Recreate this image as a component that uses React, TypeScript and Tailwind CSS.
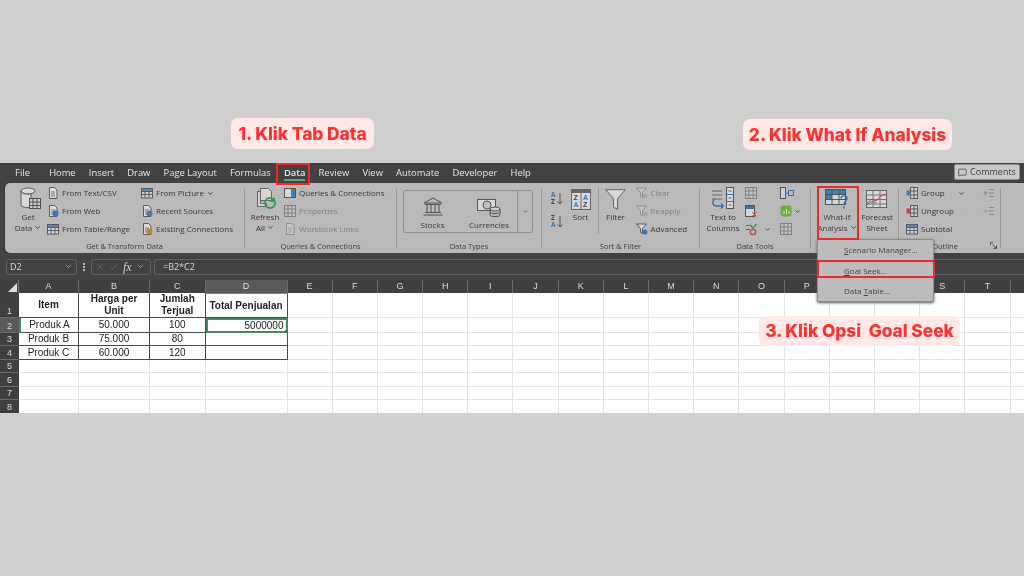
import type { ReactNode } from "react";
import clsx from "clsx";
import { ChevronDown, Check, X, MessageSquare } from "lucide-react";

const tabs = ["File", "Home", "Insert", "Draw", "Page Layout", "Formulas", "Data", "Review", "View", "Automate", "Developer", "Help"];
const columns = "ABCDEFGHIJKLMNOPQRSTU".split("");

const rows: Record<number, string[]> = {
  1: ["Item", "Harga per Unit", "Jumlah Terjual", "Total Penjualan"],
  2: ["Produk A", "50.000", "100", "5000000"],
  3: ["Produk B", "75.000", "80", ""],
  4: ["Produk C", "60.000", "120", ""],
};

const Icon = ({ w = 12, h = 12, children }: { w?: number; h?: number; children: ReactNode }) => (
  <svg width={w} height={h} viewBox={`0 0 ${w} ${h}`} fill="none" className="shrink-0">
    {children}
  </svg>
);

const Doc = ({ badge, muted }: { badge?: string; muted?: boolean }) => (
  <Icon>
    <path d="M2.500 .5h5l2.500 2.500v8.500h-7.500z" fill={muted ? "#c6c6c6" : "#dcdcdc"} stroke={muted ? "#8f8f8f" : "#5c5c5c"} />
    <path d="M4 5h4M4 7h4M4 9h4" stroke={muted ? "#a0a0a0" : "#777"} />
    {badge && <circle cx="8.500" cy="8.500" r="3" fill={badge} />}
  </Icon>
);

const TableIcon = ({ fill = "#d8d8d8" }: { fill?: string }) => (
  <Icon>
    <rect x=".5" y="1.500" width="11" height="9.500" fill={fill} stroke="#5c5c5c" />
    <path d="M.5 4.500h11M.5 7.500h11M4 1.500v9.500M8 1.500v9.500" stroke="#5c5c5c" />
    <rect x="1" y="2" width="10" height="2" fill="#4d8bbd" />
  </Icon>
);

const OutlineIcon = ({ mark }: { mark: string }) => (
  <Icon>
    <rect x="4.500" y=".5" width="7" height="11" fill="#d0d0d0" stroke="#5c5c5c" />
    <path d="M4.500 4h7M4.500 8h7M8 .5v11" stroke="#5c5c5c" />
    <rect x=".5" y="3.500" width="4" height="5" fill={mark} />
  </Icon>
);

const Funnel = ({ muted, badge }: { muted?: boolean; badge?: string }) => (
  <Icon>
    <path d="M.5 1h10l-4 4.500v5l-2-1v-4z" fill={muted ? "#c4c4c4" : "#d6d6d6"} stroke={muted ? "#8f8f8f" : "#555"} />
    {badge && <circle cx="9" cy="9" r="2.500" fill={badge} />}
  </Icon>
);

const GreyGrid = () => (
  <Icon>
    <rect x=".5" y=".5" width="11" height="11" fill="#c2c2c2" stroke="#808080" />
    <path d="M.5 4h11M.5 8h11M4 .5v11M8 .5v11" stroke="#808080" />
  </Icon>
);

function SmallRow({ icon, label, muted, caret }: { icon: ReactNode; label: string; muted?: boolean; caret?: boolean }) {
  return (
    <div className={clsx("flex h-[18px] items-center gap-[3px] whitespace-nowrap", muted ? "text-[#838383]" : "text-[#383838]")}>
      {icon}
      <span>{label}</span>
      {caret && <ChevronDown size={7} strokeWidth={3} />}
    </div>
  );
}

function Group({ label, className, children }: { label?: string; className: string; children: ReactNode }) {
  return (
    <section className={clsx("flex h-full shrink-0 flex-col", className)}>
      <div className="flex h-[56px] items-start">{children}</div>
      <p className="h-[14px] text-center text-[7.500px] leading-[14px] text-[#3d3d3d]">{label}</p>
    </section>
  );
}

const Sep = () => <div className="my-[5px] w-px shrink-0 bg-[#999999]" />;

function Big({ icon, lines, className, caret }: { icon: ReactNode; lines: string[]; className: string; caret?: boolean }) {
  return (
    <div className={clsx("flex shrink-0 flex-col items-center text-center leading-[11px] text-[#383838]", className)}>
      <div className="flex h-[24px] items-end">{icon}</div>
      <div className="mt-[1px]">{lines[0]}</div>
      <div className="flex items-center gap-[2px]">
        {lines[1]}
        {caret && <ChevronDown size={7} strokeWidth={3} />}
      </div>
    </div>
  );
}

function GridCell({ row, col }: { row: number; col: number }) {
  const value = col < 4 ? rows[row]?.[col] : "";
  const inTable = row <= 4 && col < 4;
  const isActive = row === 2 && col === 3;
  return (
    <div
      className={clsx(
        "flex items-center justify-center overflow-hidden px-[2px] text-center text-[10px] text-[#222222]",
        row === 1 ? "leading-[12px]" : "leading-[13px]",
        isActive
          ? "relative justify-end overflow-visible border-2 border-[#3f8c63]"
          : clsx("border-r border-b", inTable ? "border-[#4a4a4a]" : "border-[#e2e2e2]"),
        row === 1 && col < 4 && "font-bold",
        row === 1 && col === 3 && "whitespace-nowrap border-t border-t-[#5f9c7c]",
        row === 2 && col === 0 && "border-l-2 border-l-[#3f8c63]",
      )}
    >
      {value}
      {isActive && <span className="absolute -right-[2px] -bottom-[2px] size-[3px] bg-[#2f7d55]" />}
    </div>
  );
}

function Sheet() {
  return (
    <div className="grid h-[133px] grid-cols-[19px_60px_71px_55.5px_82px_repeat(17,45.2px)] grid-rows-[13px_25px_14.5px_13.5px_13.5px_repeat(4,13.5px)] overflow-hidden bg-white font-['Liberation_Sans',sans-serif]">
      <div className="flex items-end justify-end border-r border-[#777777] bg-[#3f3f3f] p-[1px]">
        <div className="size-0 border-b-[9px] border-l-[9px] border-b-[#dddddd] border-l-transparent" />
      </div>
      {columns.map((c) => (
        <div
          key={c}
          className={clsx(
            "flex items-center justify-center border-r border-[#6a6a6a] text-[9px] text-[#dcdcdc]",
            c === "D" ? "bg-[#5a5a5a]" : "bg-[#3f3f3f]",
          )}
        >
          {c === "U" ? "" : c}
        </div>
      ))}
      {[1, 2, 3, 4, 5, 6, 7, 8].flatMap((r) => [
        <div
          key={`h${r}`}
          className={clsx(
            "flex items-end justify-center border-b border-[#6a6a6a] text-[9px] leading-[12px] text-[#dcdcdc]",
            r === 2 ? "bg-[#5a5a5a]" : "bg-[#3f3f3f]",
          )}
        >
          {r}
        </div>,
        ...columns.map((_, c) => <GridCell key={`${r}-${c}`} row={r} col={c} />),
      ])}
    </div>
  );
}

function SortArrow() {
  return (
    <svg width="6" height="12" viewBox="0 0 6 12" fill="none" stroke="#555" className="ml-[1px]">
      <path d="M3 0v11M.5 8.500L3 11l2.500-2.500" />
    </svg>
  );
}

function Ribbon() {
  return (
    <div className="ml-[5px] flex h-[70px] rounded-l-[5px] bg-[#b9b9b9] font-['Open_Sans',sans-serif] text-[8px] shadow-[0_1px_2px_#222]">
      <Group label="Get & Transform Data" className="w-[239px]">
        <Big
          className="ml-[7px] mt-[3px] w-[32px]"
          lines={["Get", "Data"]}
          caret
          icon={
            <div className="pl-[4px]">
              <Icon w={22} h={23}>
                <ellipse cx="9" cy="4" rx="7" ry="3" fill="#dcdcdc" stroke="#5c5c5c" />
                <path d="M2 4v14c0 1.500 3 2.500 7 2.500h3V7c-2 .3-9 .5-10-3z" fill="#d8d8d8" stroke="#5c5c5c" />
                <rect x="10.500" y="11.500" width="11" height="10" fill="#cfcfcf" stroke="#4f4f4f" />
                <path d="M10.500 15h11M10.500 18.500h11M14 11.500v10M18 11.500v10" stroke="#4f4f4f" />
              </Icon>
            </div>
          }
        />
        <div className="ml-[3px] w-[94px] pt-[1px]">
          <SmallRow icon={<Doc />} label="From Text/CSV" />
          <SmallRow icon={<Doc badge="#3576ad" />} label="From Web" />
          <SmallRow icon={<TableIcon />} label="From Table/Range" />
        </div>
        <div className="pt-[1px]">
          <SmallRow icon={<TableIcon fill="#cfcfcf" />} label="From Picture" caret />
          <SmallRow icon={<Doc badge="#4d7fa8" />} label="Recent Sources" />
          <SmallRow icon={<Doc badge="#b88a2c" />} label="Existing Connections" />
        </div>
      </Group>
      <Sep />
      <Group label="Queries & Connections" className="w-[151px]">
        <Big
          className="ml-[4px] mt-[3px] w-[32px]"
          lines={["Refresh", "All"]}
          caret
          icon={
            <div className="pl-[3px]">
              <Icon w={21} h={23}>
                <path d="M4.500 1.500h8l3 3v9h-11z" fill="#d6d6d6" stroke="#666" />
                <path d="M1.500 4.500h3v12h6v3h-9z" fill="#cfcfcf" stroke="#666" />
                <circle cx="14" cy="16" r="5" stroke="#3d9658" strokeWidth="2" />
                <path d="M19 10v5h-5" fill="#3d9658" />
              </Icon>
            </div>
          }
        />
        <div className="ml-[3px] pt-[1px]">
          <SmallRow
            icon={
              <Icon>
                <rect x=".5" y="1.500" width="11" height="9" fill="#d8d8d8" stroke="#555" />
                <rect x="7" y="2" width="4" height="8" fill="#3f7fb8" />
              </Icon>
            }
            label="Queries & Connections"
          />
          <SmallRow icon={<GreyGrid />} label="Properties" muted />
          <SmallRow icon={<Doc muted />} label="Workbook Links" muted />
        </div>
      </Group>
      <Sep />
      <Group label="Data Types" className="w-[144px]">
        <div className="ml-[6px] mt-[7px] flex h-[43px] w-[130px] rounded-[3px] border border-[#8f8f8f] text-[#383838]">
          <div className="flex w-[57px] flex-col items-center">
            <svg width="22" height="20" viewBox="0 0 22 20" fill="none" className="mt-[6px]" stroke="#555">
              <path d="M11 1L2 6h18zM3 7.500h16M5 8v7M9 8v7M13 8v7M17 8v7M3 15.500h16M1.500 18h19" />
            </svg>
            <span className="mt-[2px]">Stocks</span>
          </div>
          <div className="flex w-[56px] flex-col items-center">
            <svg width="24" height="20" viewBox="0 0 24 20" fill="none" className="mt-[6px]" stroke="#555">
              <rect x=".5" y="2.500" width="18" height="11" fill="#d8d8d8" />
              <circle cx="10" cy="8" r="4" fill="#c2c2c2" />
              <ellipse cx="18" cy="12" rx="5" ry="2" fill="#d0d0d0" />
              <path d="M13 12v6c0 1 2 1.500 5 1.500s5-.5 5-1.500v-6M13 15c0 1 2 1.500 5 1.500s5-.5 5-1.500" />
            </svg>
            <span className="mt-[2px]">Currencies</span>
          </div>
          <div className="flex flex-1 items-center justify-center border-l border-[#8f8f8f]">
            <ChevronDown size={7} strokeWidth={2.500} className="text-[#555]" />
          </div>
        </div>
      </Group>
      <Sep />
      <Group label="Sort & Filter" className="w-[157px]">
        <div className="ml-[9px] mt-[9px] flex flex-col gap-[10px]">
          {[
            ["A", "Z"],
            ["Z", "A"],
          ].map(([a, b]) => (
            <div key={a} className="flex items-center font-bold">
              <div className="flex flex-col text-[6.500px] leading-[6.500px]">
                <span className={a === "A" ? "text-[#2f77b5]" : "text-[#444]"}>{a}</span>
                <span className={b === "A" ? "text-[#2f77b5]" : "text-[#444]"}>{b}</span>
              </div>
              <SortArrow />
            </div>
          ))}
        </div>
        <Big
          className="ml-[6px] mt-[3px] w-[24px]"
          lines={["Sort", ""]}
          icon={
            <svg width="20" height="21" viewBox="0 0 20 21" fill="none" className="font-['Liberation_Sans',sans-serif] text-[7px] font-bold">
              <rect x=".5" y=".5" width="19" height="20" fill="#d8d8d8" stroke="#666" />
              <rect x="1" y="1" width="18" height="3" fill="#666" />
              <path d="M10 4v16" stroke="#666" />
              <text x="2.500" y="11" fill="#444">Z</text>
              <text x="12" y="11" fill="#2f77b5">A</text>
              <text x="2.500" y="18" fill="#2f77b5">A</text>
              <text x="12" y="18" fill="#444">Z</text>
            </svg>
          }
        />
        <div className="ml-[5px] mt-[5px] h-[46px] w-px bg-[#999999]" />
        <Big
          className="ml-[3px] mt-[3px] w-[28px]"
          lines={["Filter", ""]}
          icon={
            <svg width="21" height="21" viewBox="0 0 21 21" fill="none">
              <path d="M.7 .7h19.600l-7.800 9v10.500l-4-2v-8.500z" fill="#d8d8d8" stroke="#666" />
            </svg>
          }
        />
        <div className="ml-[6px] pt-[1px]">
          <SmallRow icon={<Funnel muted badge="#a8a8a8" />} label="Clear" muted />
          <SmallRow icon={<Funnel muted badge="#a8a8a8" />} label="Reapply" muted />
          <SmallRow icon={<Funnel badge="#2f77b5" />} label="Advanced" />
        </div>
      </Group>
      <Sep />
      <Group label="Data Tools" className="w-[110px]">
        <Big
          className="ml-[5px] mt-[3px] w-[36px]"
          lines={["Text to", "Columns"]}
          icon={
            <Icon w={24} h={23}>
              <path d="M1 4h10M1 8h10M1 12h10" stroke="#666" />
              <rect x="15.500" y=".5" width="7" height="21" fill="#d8d8d8" stroke="#555" />
              <path d="M15.500 7.500h7M15.500 14.500h7M17.500 4h3M17.500 11h3M17.500 18h3" stroke="#2f77b5" />
              <path d="M4 12c-3 2-3 6 1 7h7m-2-2.500l2.500 2.500-2.500 2.500" stroke="#2f77b5" strokeWidth="1.300" />
            </Icon>
          }
        />
        <div className="ml-[4px] w-[35px] pt-[1px]">
          <div className="flex h-[18px] items-center"><GreyGrid /></div>
          <div className="flex h-[18px] items-center">
            <Icon>
              <rect x=".5" y=".5" width="9" height="11" fill="#d6d6d6" stroke="#555" />
              <rect x="1" y="1" width="8" height="3" fill="#2f77b5" />
              <path d="M7 7l4.500 4.500M11.500 7L7 11.500" stroke="#c8413b" />
            </Icon>
          </div>
          <div className="flex h-[18px] items-center gap-[7px]">
            <Icon>
              <path d="M1 2.500h6M1 6.500h4" stroke="#666" />
              <path d="M6 3l2 2 3.500-4" stroke="#3d9658" strokeWidth="1.200" />
              <circle cx="8" cy="9" r="2.700" stroke="#c8413b" strokeWidth="1.200" />
            </Icon>
            <ChevronDown size={7} strokeWidth={3} className="text-[#444]" />
          </div>
        </div>
        <div className="pt-[1px]">
          <div className="flex h-[18px] items-center">
            <Icon w={14}>
              <rect x=".5" y=".5" width="5" height="11" fill="#d0d0d0" stroke="#555" />
              <rect x="8.500" y="3.500" width="5" height="5" stroke="#2f77b5" />
              <path d="M5 6h4" stroke="#2f77b5" />
            </Icon>
          </div>
          <div className="flex h-[18px] items-center gap-[2px]">
            <Icon>
              <rect x=".5" y=".5" width="11" height="11" rx="3" fill="#6fae43" />
              <path d="M4 9V6M6.500 9V4M9 9V6" stroke="#d8e8c8" />
            </Icon>
            <ChevronDown size={7} strokeWidth={3} className="text-[#444]" />
          </div>
          <div className="flex h-[18px] items-center"><GreyGrid /></div>
        </div>
      </Group>
      <Sep />
      <Group className="w-[87px]">
        <Big
          className="ml-[5px] mt-[3px] w-[42px]"
          lines={["What-If", "Analysis"]}
          caret
          icon={
            <Icon w={24} h={22}>
              <rect x=".5" y="1.500" width="20" height="15" fill="#d6d6d6" stroke="#555" />
              <rect x="1" y="2" width="6" height="9" fill="#3f7fb8" />
              <rect x="7" y="2" width="13" height="4" fill="#3f7fb8" />
              <path d="M.5 6.500h20M.5 11.500h20M7 1.500v15M14 1.500v15" stroke="#555" />
              <path d="M16 10.500c0-3.500 6-3.500 6 0 0 2.500-3 2.500-3 5.500M19 18v2.500" stroke="#2f77b5" strokeWidth="1.400" />
            </Icon>
          }
        />
        <Big
          className="ml-[1px] mt-[3px] w-[36px]"
          lines={["Forecast", "Sheet"]}
          icon={
            <Icon w={22} h={20}>
              <rect x=".5" y=".5" width="20" height="17" fill="#d6d6d6" stroke="#666" />
              <path d="M.5 5h20M.5 9.500h20M.5 14h20M7 .5v17M14 .5v17" stroke="#777" />
              <path d="M1 13l5-4 4 2 5-5 5-2" stroke="#c8413b" />
              <path d="M1 14.500l5-3 4 1" stroke="#2f77b5" />
            </Icon>
          }
        />
      </Group>
      <Sep />
      <Group label="Outline" className="relative w-[101px] pl-[7px] pr-[16px]">
        <div className="w-[62px] shrink-0 pt-[1px]">
          <div className="flex items-center">
            <SmallRow icon={<OutlineIcon mark="#3f7fb8" />} label="Group" />
            <ChevronDown size={7} strokeWidth={3} className="ml-[13px] text-[#444]" />
          </div>
          <div className="flex items-center">
            <SmallRow icon={<OutlineIcon mark="#c8413b" />} label="Ungroup" />
            <ChevronDown size={7} strokeWidth={3} className="ml-[13px] text-[#444]" />
          </div>
          <SmallRow icon={<TableIcon fill="#cfcfcf" />} label="Subtotal" />
        </div>
        <div className="ml-[15px] shrink-0 pt-[1px]">
          {[0, 1].map((i) => (
            <div key={i} className="flex h-[18px] items-center">
              <Icon>
                <path d="M6 2.500h5M6 6h5M6 9.500h5" stroke="#8a8a8a" />
                <path d={i === 0 ? "M.5 6h4M2.500 4v4" : "M.5 6h4"} stroke="#8a8a8a" />
              </Icon>
            </div>
          ))}
        </div>
        <svg width="7" height="7" viewBox="0 0 7 7" fill="none" stroke="#555" className="absolute right-[3px] bottom-[4px]">
          <path d="M.5 3V.5H3M2.500 2.500l4 4M6.500 3.500v3h-3" />
        </svg>
      </Group>
      <Sep />
    </div>
  );
}

function FormulaBar() {
  return (
    <div className="flex h-[27px] items-center bg-[#424242] pl-[6px] font-['Open_Sans',sans-serif] text-[9px] text-[#d8d8d8]">
      <div className="flex h-[16px] w-[71px] items-center justify-between rounded-[3px] border border-[#5f5f5f] px-[3px]">
        D2
        <ChevronDown size={9} className="text-[#bbbbbb]" />
      </div>
      <div className="mx-[6px] flex w-[2px] flex-col gap-[1px]">
        <span className="h-[2px] bg-[#bbbbbb]" />
        <span className="h-[2px] bg-[#bbbbbb]" />
        <span className="h-[2px] bg-[#bbbbbb]" />
      </div>
      <div className="flex h-[16px] w-[60px] items-center gap-[4px] rounded-[3px] border border-[#5f5f5f] px-[3px] text-[#8c8c8c]">
        <X size={10} strokeWidth={1} />
        <Check size={10} strokeWidth={1} />
        <span className="font-['Liberation_Serif',serif] text-[12px] italic text-[#cccccc]">fx</span>
        <ChevronDown size={9} className="text-[#bbbbbb]" />
      </div>
      <div className="ml-[3px] flex h-[16px] flex-1 items-center rounded-l-[3px] border border-r-0 border-[#5f5f5f] pl-[8px]">
        =B2*C2
      </div>
    </div>
  );
}

function Callout({ className, children }: { className: string; children: ReactNode }) {
  return (
    <div className={clsx("absolute z-20 flex items-center justify-center rounded-[7px] bg-[#ffe8e6] font-['Inter',sans-serif] text-[17.300px] font-extrabold whitespace-nowrap text-[#ff3131]", className)}>
      {children}
    </div>
  );
}

export default function App() {
  return (
    <main className="relative h-[576px] w-[1024px] overflow-hidden bg-[#cfcfcf] pt-[163px] blur-[0.3px]">
      <Callout className="top-[118px] left-[231px] h-[31px] w-[143px]">1. Klik Tab Data</Callout>
      <Callout className="top-[119px] left-[743px] h-[31px] w-[209px]">2. Klik What If Analysis</Callout>
      <Callout className="top-[316px] left-[759px] h-[30px] w-[201px]">3. Klik Opsi&nbsp; Goal Seek</Callout>

      <div className="bg-[#424242]">
        <div className="relative flex h-[20px] items-center pl-[8.500px] font-['Open_Sans',sans-serif] text-[9.400px] text-[#e6e6e6]">
          {tabs.map((t) => (
            <div key={t} className={clsx("relative px-[6.600px]", t === "File" && "mr-[6px]", t === "Data" && "font-semibold")}>
              {t}
              {t === "Data" && <span className="absolute right-[6.600px] -bottom-[1px] left-[6.600px] h-[2px] bg-[#62a886]" />}
            </div>
          ))}
          <div className="absolute top-[1px] right-[4px] flex h-[16px] w-[66px] items-center justify-center gap-[3px] rounded-[2px] border border-[#8a8a8a] bg-[#c9c9c9] text-[9px] text-[#3f3f3f]">
            <MessageSquare size={9} />
            Comments
          </div>
        </div>
        <Ribbon />
        <FormulaBar />
        <Sheet />
      </div>

      {/* red marks and the open menu sit over the ribbon */}
      <div className="absolute top-[163px] left-[276px] z-10 h-[22px] w-[34px] border-[2.500px] border-[#f02a2a]" />
      <div className="absolute top-[186px] left-[817px] z-10 h-[54px] w-[42px] border-[2.500px] border-[#f02a2a]" />
      <div className="absolute top-[239px] left-[817px] z-[5] flex h-[63px] w-[117px] flex-col rounded-[2px] border border-[#8a8a8a] bg-[#bcbcbc] pl-[26px] font-['Open_Sans',sans-serif] text-[8px] leading-[20.500px] text-[#444444] shadow-[0_1px_3px_#555]">
        <div><span className="underline">S</span>cenario Manager...</div>
        <div><span className="underline">G</span>oal Seek...</div>
        <div>Data <span className="underline">T</span>able...</div>
      </div>
      <div className="absolute top-[260px] left-[817px] z-10 h-[18px] w-[118px] border-[2.500px] border-[#f02a2a]" />
    </main>
  );
}
